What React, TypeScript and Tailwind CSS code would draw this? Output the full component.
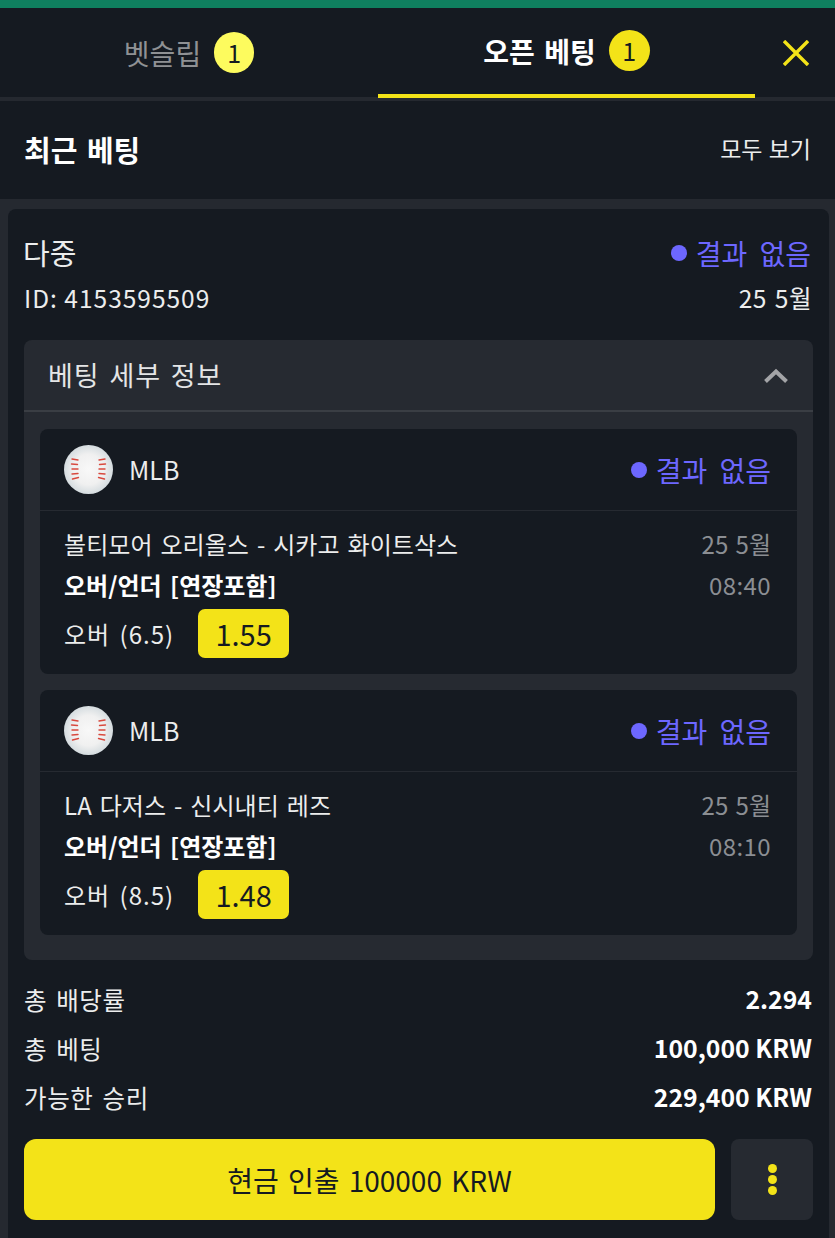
const Ball = () => (
  <svg width="49" height="49" viewBox="0 0 49 49" className="shrink-0">
    <defs>
      <radialGradient id="bg" cx="50%" cy="50%" r="52%">
        <stop offset="0%" stopColor="#f8f8f8" />
        <stop offset="60%" stopColor="#f0f0f0" />
        <stop offset="100%" stopColor="#d2dade" />
      </radialGradient>
    </defs>
    <circle cx="24.5" cy="24.5" r="24.5" fill="url(#bg)" />
    <g stroke="#d8493e" strokeWidth="1.4" fill="none" strokeLinecap="round">
      <path d="M8 14l6 1M7.5 19l6 .5M8 24h6M8 29l6-.5M8.5 34l6-1.5" />
      <path d="M41 14l-6 1M41.5 19l-6 .5M41 24h-6M41 29l-6-.5M40.5 34l-6-1.5" />
    </g>
  </svg>
);

const Status = () => (
  <div className="flex items-center gap-[9px] text-[28px] leading-[36px] text-[#6d67ff] [word-spacing:6px]">
    <span className="h-4 w-4 rounded-full bg-[#6d67ff]" />
    <span>결과 없음</span>
  </div>
);

const Leg = ({ game, time, line, odds }: { game: string; time: string; line: string; odds: string }) => (
  <div className="rounded-[8px] bg-[#151a21]">
    <div className="flex h-[82px] items-center justify-between border-b border-[#262a31] pl-[24px] pr-[26px]">
      <div className="flex items-center gap-[16px]">
        <Ball />
        <span className="text-[25px] text-[#eceded]">MLB</span>
      </div>
      <Status />
    </div>
    <div className="flex justify-between pl-[24px] pr-[26px] pt-[12px]">
      <div>
        <div className="h-[41px] text-[24px] leading-[41px] tracking-[0.05px] text-[#eceded] [word-spacing:2.5px]">{game}</div>
        <div className="h-[41px] text-[24px] font-bold leading-[41px] text-white [word-spacing:3px]">오버/언더 [연장포함]</div>
        <div className="mt-[4px] flex items-center gap-[24px] pb-[16px]">
          <span className="text-[24px] tracking-[1px] text-[#eceded] [word-spacing:3px]">오버 ({line})</span>
          <span className="flex h-[49px] w-[91px] items-center justify-center rounded-[7px] bg-[#f3e318] text-[29px] text-[#151a21]">{odds}</span>
        </div>
      </div>
      <div className="text-right text-[24px] leading-[41px] text-[#8b8e93]">
        <div className="[word-spacing:2px]">25 5월</div>
        <div className="tracking-[0.4px]">{time}</div>
      </div>
    </div>
  </div>
);

const Row = ({ label, value }: { label: string; value: string }) => (
  <div className="flex h-[49px] items-center justify-between pr-px text-[24.5px]">
    <span className="tracking-[0.6px] text-[#eceded] [word-spacing:3px]">{label}</span>
    <span className="pb-[3px] text-[24.8px] font-bold text-white">{value}</span>
  </div>
);

export default function App() {
  return (
    <div className="h-[1238px] w-[835px] overflow-hidden bg-[#252930] font-['Noto_Sans_CJK_KR','Noto_Sans',sans-serif]">
      <div className="h-2 bg-[#0f805f]" />
      <div className="flex h-[89px] bg-[#151a21]">
        <div className="flex w-[378px] items-center justify-center gap-[13px]">
          <span className="text-[28px] text-[#8f9194]">벳슬립</span>
          <span className="flex h-[41px] w-[40px] items-center justify-center rounded-full bg-[#fdfb5e] text-[25px] text-[#151a21]">1</span>
        </div>
        <div className="relative flex w-[377px] items-center justify-center gap-[13px] pb-[4px]">
          <span className="text-[28px] font-bold text-white [word-spacing:3px]">오픈 베팅</span>
          <span className="flex h-[41px] w-[41px] items-center justify-center rounded-full bg-[#f3e318] text-[25px] text-[#151a21]">1</span>
          <span className="absolute bottom-[-1px] left-0 h-1 w-full bg-[#f3e318]" />
        </div>
        <div className="flex flex-1 items-center justify-center pl-[2px]">
          <svg width="26" height="26" viewBox="0 0 26 26" stroke="#f3e318" strokeWidth="3.4" fill="none">
            <path d="M1 1l24 24M25 1L1 25" />
          </svg>
        </div>
      </div>
      <div className="h-1 bg-[#252930]" />
      <div className="flex h-[98px] items-center justify-between bg-[#151a21] px-[24px]">
        <span className="text-[29px] font-bold text-white [word-spacing:3px]">최근 베팅</span>
        <span className="pb-[3px] text-[23px] text-[#eceded] [word-spacing:1px]">모두 보기</span>
      </div>
      <div className="h-[10px]" />
      <div className="ml-2 h-[1029px] w-[821px] rounded-t-[8px] bg-[#151a21] px-4 pt-[24px]">
        <div className="-ml-px flex h-[40px] items-center justify-between pr-[2px] text-[29px] text-[#eceded]">
          <span>다중</span>
          <Status />
        </div>
        <div className="mt-[5px] flex h-[40px] items-center justify-between pr-[1px] text-[24.5px] text-[#eceded]">
          <span className="tracking-[1px]">ID: 4153595509</span>
          <span className="tracking-[0.5px] [word-spacing:2px]">25 5월</span>
        </div>
        <div className="mt-[22px] rounded-[8px] bg-[#262a31] pb-[25px]">
          <div className="flex h-[72px] items-center justify-between border-b-2 border-[#3a3e44] pl-[24px] pr-[25px]">
            <span className="text-[27px] tracking-[0.9px] text-[#e4e5e6] [word-spacing:3px]">베팅 세부 정보</span>
            <svg width="24" height="15" viewBox="0 0 24 15" stroke="#a3a4a7" strokeWidth="4" fill="none">
              <path d="M1.5 13.5L12 3.5l10.5 10" />
            </svg>
          </div>
          <div className="flex flex-col gap-[16px] px-4 pt-[17px]">
            <Leg game="볼티모어 오리올스 - 시카고 화이트삭스" time="08:40" line="6.5" odds="1.55" />
            <Leg game="LA 다저스 - 신시내티 레즈" time="08:10" line="8.5" odds="1.48" />
          </div>
        </div>
        <div className="mt-[16px]">
          <Row label="총 배당률" value="2.294" />
          <Row label="총 베팅" value="100,000 KRW" />
          <Row label="가능한 승리" value="229,400 KRW" />
        </div>
        <div className="mt-[16px] flex gap-4">
          <div className="flex h-[81px] flex-1 items-center justify-center rounded-[12px] bg-[#f3e318] text-[28px] text-[#151a21] [word-spacing:3px]">현금 인출 100000 KRW</div>
          <div className="flex h-[81px] w-[82px] flex-col items-center justify-center gap-[2px] rounded-[8px] bg-[#262a31]">
            <span className="h-[9px] w-[9px] rounded-full bg-[#f3e318]" />
            <span className="h-[9px] w-[9px] rounded-full bg-[#f3e318]" />
            <span className="h-[9px] w-[9px] rounded-full bg-[#f3e318]" />
          </div>
        </div>
      </div>
    </div>
  );
}
